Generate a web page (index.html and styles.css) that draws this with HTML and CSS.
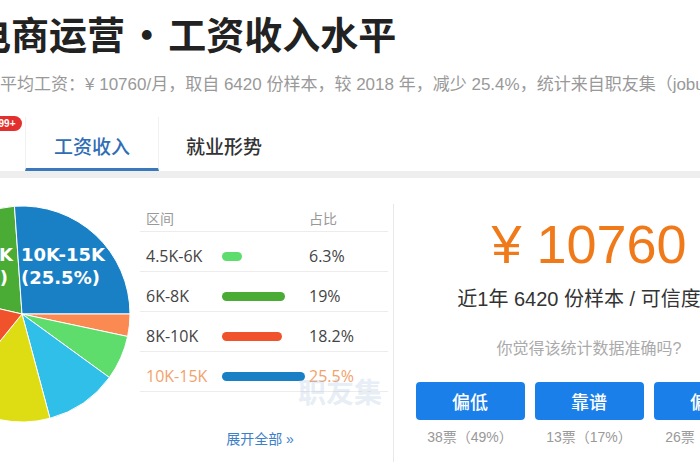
FILE: index.html
```html
<!DOCTYPE html>
<html lang="zh-CN">
<head>
  <meta charset="UTF-8">
  <meta name="viewport" content="width=device-width, initial-scale=1.0">
  <title>电商运营 • 工资收入水平</title>
  <link rel="stylesheet" href="styles.css">
</head>
<body>
  <h1 class="title">电商运营 • 工资收入水平</h1>
  <p class="summary">平均工资：¥ 10760/月，取自 6420 份样本，较 2018 年，减少 25.4%，统计来自职友集（jobui.com）</p>

  <div class="tabs">
    <span class="badge">99+</span>
    <div class="tab active">工资收入</div>
    <div class="tab">就业形势</div>
  </div>

  <div class="main">
    <div class="left">
      <svg class="pie" width="216" height="216" viewBox="0 0 216 216">
        <path fill="#4aab35" d="M108,108 L2.76,83.70 A108,108 0 0 1 100.46,0.26 Z"/>
        <path fill="#1a80c6" d="M108,108 L100.46,0.26 A108,108 0 0 1 216,108 Z"/>
        <path fill="#fa8a52" d="M108,108 L216,108 A108,108 0 0 1 213.64,130.46 Z"/>
        <path fill="#5fdd6c" d="M108,108 L213.64,130.46 A108,108 0 0 1 195.37,171.48 Z"/>
        <path fill="#2fbfe9" d="M108,108 L195.37,171.48 A108,108 0 0 1 135.95,212.32 Z"/>
        <path fill="#dedc12" d="M108,108 L135.95,212.32 A108,108 0 0 1 40.04,191.93 Z"/>
        <path fill="#f0532b" d="M108,108 L40.04,191.93 A108,108 0 0 1 2.76,83.70 Z"/>
        <g class="pie-label">
          <text x="107" y="55">10K-15K</text>
          <text x="107" y="78">(25.5%)</text>
          <text x="99" y="55" text-anchor="end">6K-8K</text>
          <text x="94" y="78" text-anchor="end">(19%)</text>
        </g>
      </svg>

      <div class="dist">
        <div class="row head">
          <span class="range">区间</span>
          <span class="bar-cell"></span>
          <span class="pct">占比</span>
        </div>
        <div class="row">
          <span class="range">4.5K-6K</span>
          <span class="bar-cell"><i class="bar bar-lightgreen" style="width: 20px"></i></span>
          <span class="pct">6.3%</span>
        </div>
        <div class="row">
          <span class="range">6K-8K</span>
          <span class="bar-cell"><i class="bar bar-green" style="width: 63px"></i></span>
          <span class="pct">19%</span>
        </div>
        <div class="row">
          <span class="range">8K-10K</span>
          <span class="bar-cell"><i class="bar bar-red" style="width: 60px"></i></span>
          <span class="pct">18.2%</span>
        </div>
        <div class="row current">
          <span class="range">10K-15K</span>
          <span class="bar-cell"><i class="bar bar-blue" style="width: 83px"></i></span>
          <span class="pct">25.5%</span>
        </div>
        <span class="watermark">职友集</span>
        <a class="more" href="#">展开全部 »</a>
      </div>
    </div>

    <div class="right">
      <div class="price">¥ 10760</div>
      <div class="sample">近1年 6420 份样本 / 可信度：</div>
      <div class="question">你觉得该统计数据准确吗?</div>
      <div class="votes">
        <div class="vote">
          <button class="vote-btn">偏低</button>
          <span class="vote-count">38票（49%）</span>
        </div>
        <div class="vote">
          <button class="vote-btn">靠谱</button>
          <span class="vote-count">13票（17%）</span>
        </div>
        <div class="vote">
          <button class="vote-btn">偏高</button>
          <span class="vote-count">26票（34%）</span>
        </div>
      </div>
    </div>
  </div>
</body>
</html>
```

FILE: styles.css
```css
body { margin: 0; width: 700px; height: 470px; overflow: hidden; background: #fff; font-family: "Liberation Sans", "Noto Sans CJK SC", sans-serif; color: #333; }

.title { margin: 14px 0 0 -27px; font-size: 38px; line-height: 38px; font-weight: bold; color: #222; white-space: nowrap; word-spacing: -6px; font-family: "Noto Sans CJK SC", sans-serif; }
.summary { margin: 22px 0 0 0; font-size: 17px; line-height: 22px; color: #999; white-space: nowrap; }

.tabs { position: relative; display: flex; margin-top: 21px; padding-left: 25px; border-bottom: 7px solid #eeeeee; }
.tab { height: 54px; box-sizing: border-box; padding: 6px 27px 0; font-size: 19px; line-height: 45px; color: #333; font-family: "Noto Sans CJK SC", sans-serif; font-weight: 500; }
.tab.active { padding: 6px 28px 0; color: #2f6db5; border: 1px solid #f0f0f0; border-bottom: 3px solid #3a78bc; border-top: none; }
.badge { position: absolute; left: -8px; top: -1px; width: 30px; height: 15px; border-radius: 8px; background: #e3302e; color: #fff; font-size: 10px; font-weight: bold; line-height: 15px; text-align: center; }

.main { display: flex; }
.left { display: flex; align-items: flex-start; width: 393px; flex-shrink: 0; }
.pie { display: block; flex-shrink: 0; margin: 28px 0 0 -86px; }
.pie path { stroke: #fff; stroke-width: 1; }
.pie-label { fill: #fff; font-family: "DejaVu Sans", sans-serif; font-weight: bold; font-size: 18px; }

.dist { position: relative; width: 248px; margin: 21px 0 0 10px; }
.row { display: flex; height: 40px; box-sizing: border-box; padding-top: 9px; border-bottom: 1px solid #ececec; font-family: "Open Sans", "Noto Sans CJK SC", sans-serif; font-size: 16px; line-height: 31px; color: #444; }
.row.head { height: 33px; padding-top: 9px; font-size: 14px; line-height: 20px; color: #999; font-family: "Noto Sans CJK SC", sans-serif; }
.row.current { color: #f2a26c; }
.range { width: 76px; padding-left: 6px; }
.bar-cell { display: flex; align-items: center; width: 87px; }
.bar { display: block; height: 9px; border-radius: 5px; }
.bar-lightgreen { background: #5fdd6c; }
.bar-green { background: #4aab35; }
.bar-red { background: #f0532b; }
.bar-blue { background: #1a80c6; }
.pct { flex: 1; }

.watermark { position: absolute; left: 158px; top: 178px; font-size: 28px; line-height: 28px; font-weight: bold; color: rgba(170, 195, 222, 0.3); font-family: "Noto Sans CJK SC", sans-serif; }
.more { display: block; margin-top: 38px; padding-right: 8px; text-align: center; font-size: 14px; line-height: 18px; color: #3d80c8; text-decoration: none; }

.right { width: 350px; flex-shrink: 0; height: 245px; margin-top: 26px; padding: 13px 20px 0; border-left: 1px solid #e8e8e8; text-align: center; }
.price { font-size: 54px; line-height: 54px; color: #f07a1a; white-space: nowrap; }
.sample { margin-top: 15px; font-size: 20px; line-height: 26px; color: #333; white-space: nowrap; }
.question { margin-top: 27px; font-size: 16px; line-height: 20px; color: #aaa; }
.votes { display: grid; grid-template-columns: repeat(3, 109px); gap: 10px; justify-content: center; margin-top: 23px; }
.vote { display: flex; flex-direction: column; align-items: center; }
.vote-btn { width: 109px; height: 38px; border: none; border-radius: 4px; background: #1b7fe9; color: #fff; font-size: 18px; font-weight: 500; font-family: "Noto Sans CJK SC", sans-serif; padding: 0; }
.vote-count { margin-top: 8px; font-size: 14px; line-height: 18px; color: #999; white-space: nowrap; }
```
